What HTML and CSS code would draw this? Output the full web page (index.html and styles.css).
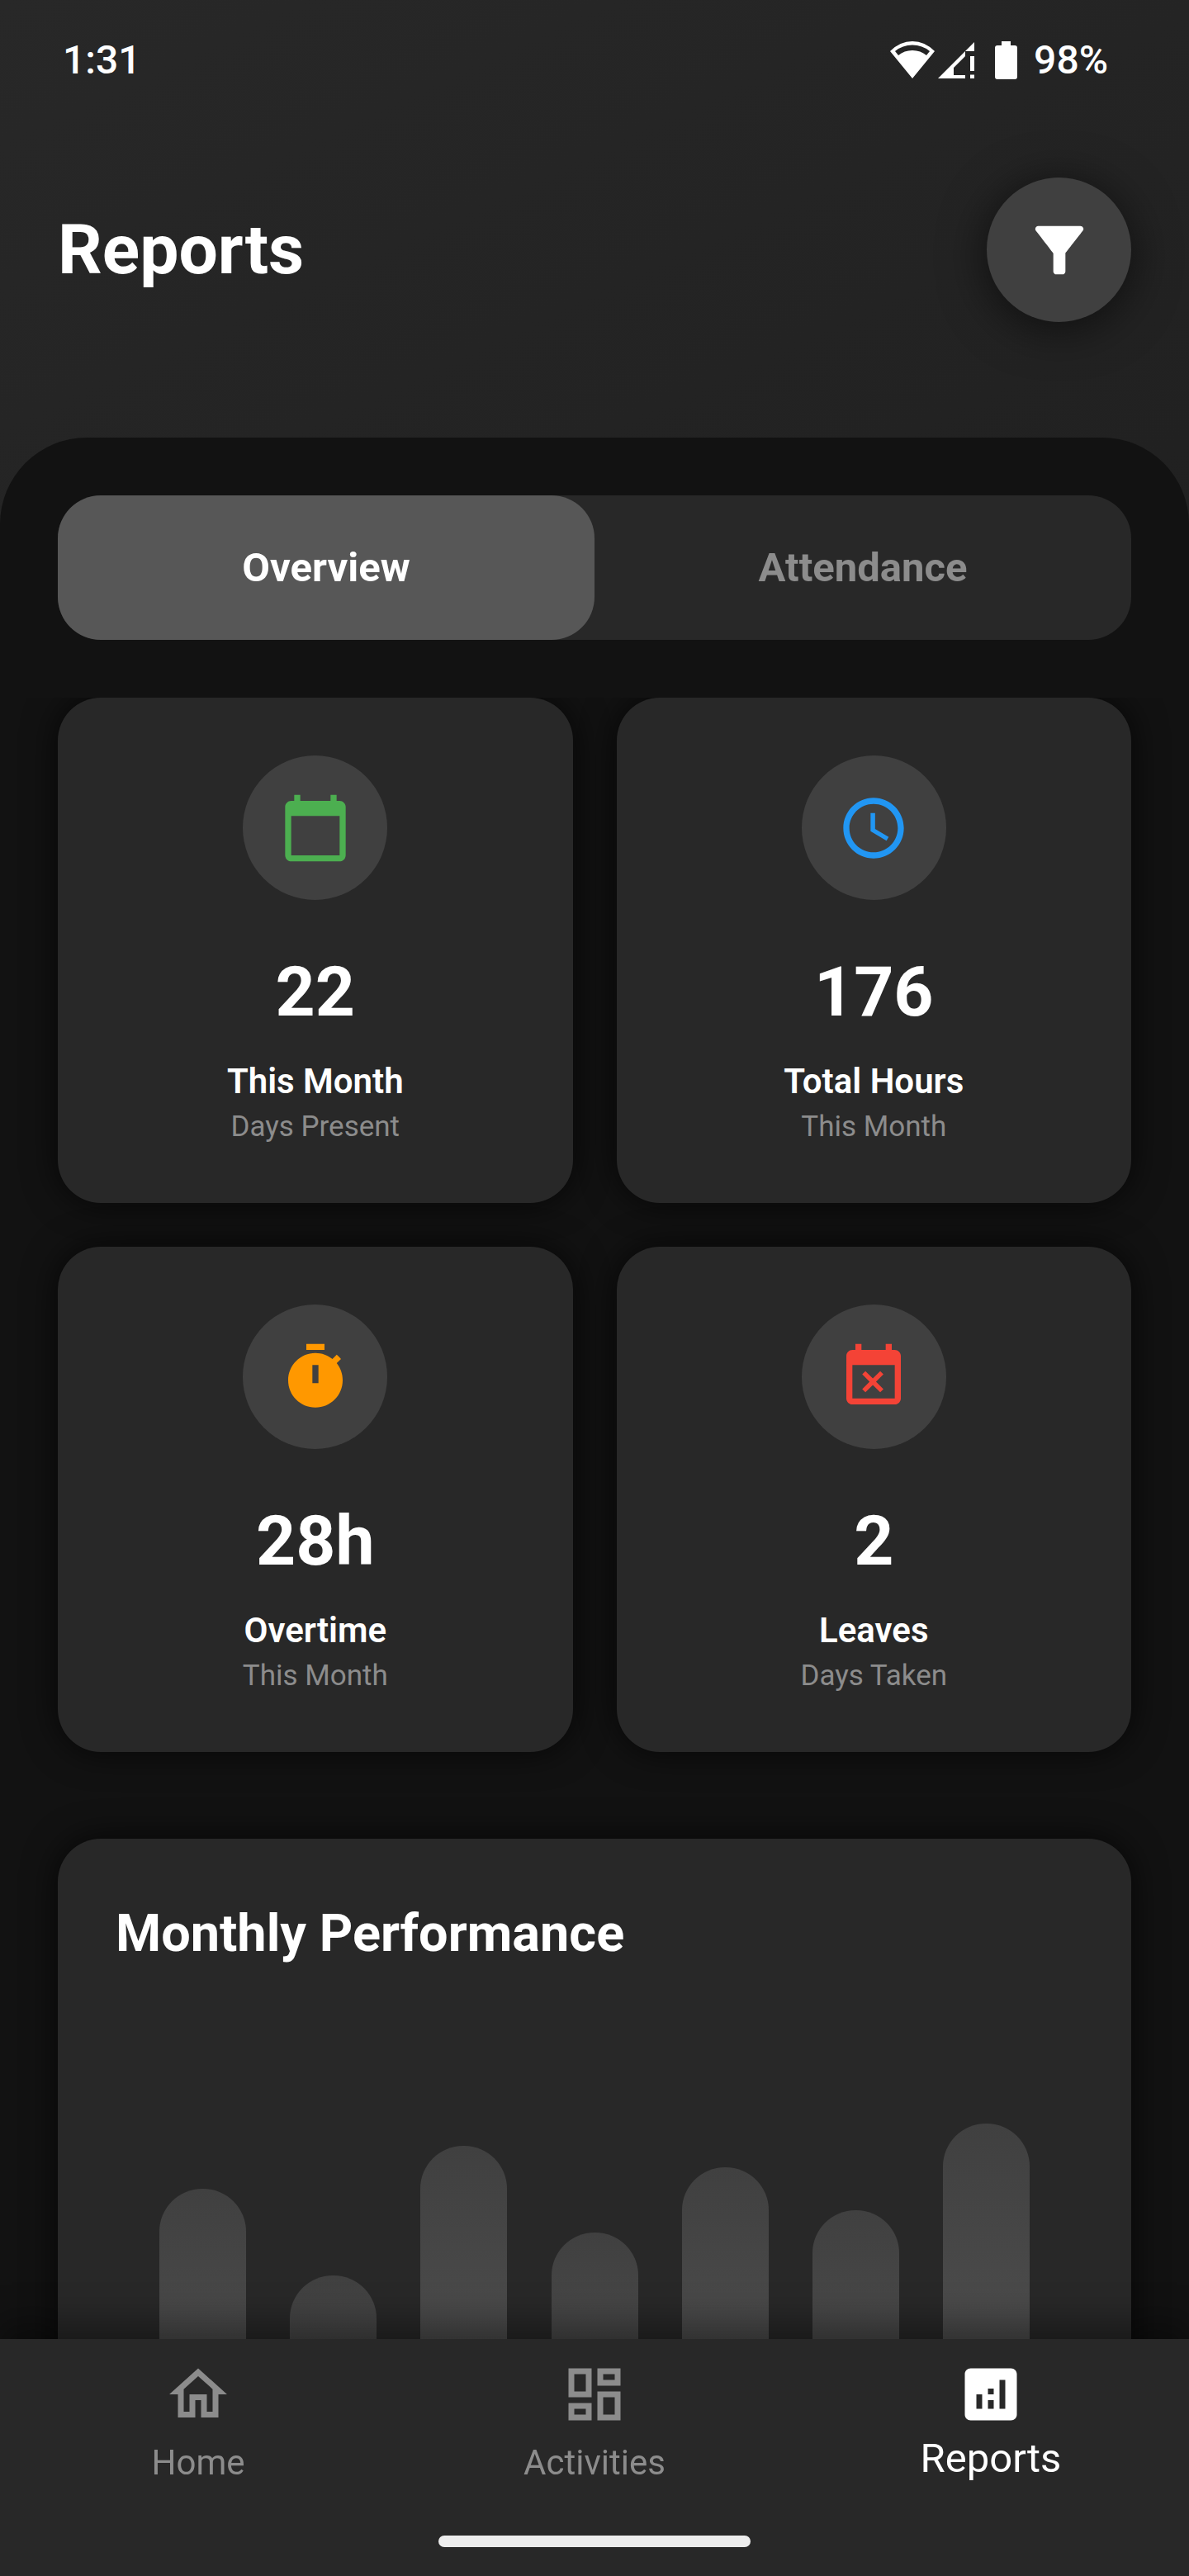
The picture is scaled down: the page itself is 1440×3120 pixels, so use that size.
FILE: index.html
```html
<!DOCTYPE html>
<html lang="en">
<head>
<meta charset="utf-8">
<meta name="viewport" content="width=device-width, initial-scale=1">
<title>Reports</title>
<link rel="stylesheet" href="styles.css">
</head>
<body>
<div class="app">
  <div class="status-bar">
    <span>1:31</span>
    <div class="status-icons">
      <svg class="wifi" viewBox="0 0 54 45" aria-hidden="true"><path fill-rule="evenodd" d="M27 45 0 12Q12 0 27 0T54 12ZM6 12 10 17Q17 11 27 11T44 17L48 12Q39 4.500 27 4.500T6 12Z"/></svg>
      <svg class="signal" viewBox="0 0 44 44" aria-hidden="true"><path fill-rule="evenodd" d="M44 0V11H33V17L19 31V40H33V44H0ZM39 17H44V35H39ZM39 39.500H44V44H39Z"/></svg>
      <svg class="battery" viewBox="0 0 27 46" aria-hidden="true"><path d="M8 0H19V5H24Q27 5 27 8V43Q27 46 24 46H3Q0 46 0 43V8Q0 5 3 5H8Z"/></svg>
      <span>98%</span>
    </div>
  </div>

  <header class="header">
    <h1 class="page-title">Reports</h1>
    <button class="filter-button" type="button" aria-label="Filter">
      <svg class="icon" viewBox="0 0 24 24" aria-hidden="true"><path d="M4.250 5.610C6.270 8.200 10 13 10 13v6c0 .55.45 1 1 1h2c.55 0 1-.45 1-1v-6s3.720-4.800 5.740-7.390A.998.998 0 0 0 18.950 4H5.040c-.83 0-1.300.95-.79 1.610z"/></svg>
    </button>
  </header>

  <main class="panel">
    <div class="tabs" role="tablist">
      <button class="tab tab-active" type="button" role="tab" aria-selected="true">Overview</button>
      <button class="tab" type="button" role="tab" aria-selected="false">Attendance</button>
    </div>

    <section class="stats" aria-label="Overview">
      <article class="card stat">
        <div class="stat-icon green"><svg class="icon" viewBox="0 0 24 24" aria-hidden="true"><path d="M20 3h-1V1h-2v2H7V1H5v2H4c-1.100 0-2 .9-2 2v16c0 1.100.9 2 2 2h16c1.100 0 2-.9 2-2V5c0-1.100-.9-2-2-2zm0 18H4V8h16v13z"/></svg></div>
        <strong class="stat-value">22</strong>
        <h2 class="stat-label">This Month</h2>
        <p class="stat-note">Days Present</p>
      </article>
      <article class="card stat">
        <div class="stat-icon blue"><svg class="icon" viewBox="0 0 24 24" aria-hidden="true"><path d="M11.990 2C6.470 2 2 6.480 2 12s4.470 10 9.990 10C17.520 22 22 17.520 22 12S17.520 2 11.990 2zM12 20c-4.420 0-8-3.580-8-8s3.580-8 8-8 8 3.580 8 8-3.580 8-8 8zM12.500 7H11v6l5.250 3.150.75-1.230-4.500-2.670z"/></svg></div>
        <strong class="stat-value">176</strong>
        <h2 class="stat-label">Total Hours</h2>
        <p class="stat-note">This Month</p>
      </article>
      <article class="card stat">
        <div class="stat-icon orange"><svg class="icon" viewBox="0 0 24 24" aria-hidden="true"><path fill-rule="evenodd" d="M15 1H9v2h6V1zm-4 13h2V8h-2v6zm8.030-6.610l1.420-1.420c-.43-.51-.9-.99-1.410-1.410l-1.420 1.420C16.070 4.740 14.120 4 12 4c-4.970 0-9 4.030-9 9s4.020 9 9 9 9-4.030 9-9c0-2.120-.74-4.070-1.970-5.610z"/></svg></div>
        <strong class="stat-value">28h</strong>
        <h2 class="stat-label">Overtime</h2>
        <p class="stat-note">This Month</p>
      </article>
      <article class="card stat">
        <div class="stat-icon red"><svg class="icon" viewBox="0 0 24 24" aria-hidden="true"><path d="M9.310 17l2.440-2.440L14.190 17l1.060-1.060-2.440-2.440 2.440-2.440L14.190 10l-2.440 2.440L9.310 10l-1.060 1.060 2.440 2.440-2.440 2.440L9.310 17zM19 3h-1V1h-2v2H8V1H6v2H5c-1.110 0-1.990.9-1.990 2L3 19c0 1.100.89 2 2 2h14c1.100 0 2-.9 2-2V5c0-1.100-.9-2-2-2zm0 16H5V8h14v11z"/></svg></div>
        <strong class="stat-value">2</strong>
        <h2 class="stat-label">Leaves</h2>
        <p class="stat-note">Days Taken</p>
      </article>
    </section>

    <section class="card chart-card">
      <h2 class="chart-title">Monthly Performance</h2>
      <div class="chart" role="img" aria-label="Monthly performance bar chart">
        <div class="bar" style="height: 80%"></div>
        <div class="bar" style="height: 60%"></div>
        <div class="bar" style="height: 90%"></div>
        <div class="bar" style="height: 70%"></div>
        <div class="bar" style="height: 85%"></div>
        <div class="bar" style="height: 75%"></div>
        <div class="bar" style="height: 95%"></div>
      </div>
    </section>
  </main>

  <footer class="bottom-bar">
    <nav class="nav" aria-label="Main">
      <a class="nav-link" href="#home">
        <svg class="nav-icon" viewBox="0 0 24 24" aria-hidden="true"><path d="M12 5.690l5 4.500V18h-2v-6H9v6H7v-7.810l5-4.500M12 3L2 12h3v8h6v-6h2v6h6v-8h3L12 3z"/></svg>
        <span>Home</span>
      </a>
      <a class="nav-link" href="#activities">
        <svg class="nav-icon" viewBox="0 0 24 24" aria-hidden="true"><path d="M19 5v2h-4V5h4M9 5v6H5V5h4m10 8v6h-4v-6h4M9 17v2H5v-2h4M21 3h-8v6h8V3zM11 3H3v10h8V3zm10 8h-8v10h8V11zm-10 4H3v6h8v-6z"/></svg>
        <span>Activities</span>
      </a>
      <a class="nav-link nav-link-active" href="#reports" aria-current="page">
        <svg class="nav-icon" viewBox="0 0 24 24" aria-hidden="true"><path d="M19 3H5c-1.100 0-2 .9-2 2v14c0 1.100.9 2 2 2h14c1.100 0 2-.9 2-2V5c0-1.100-.9-2-2-2zM9 17H7v-5h2v5zm4 0h-2v-3h2v3zm0-5h-2v-2h2v2zm4 5h-2V7h2v10z"/></svg>
        <span>Reports</span>
      </a>
    </nav>
    <div class="home-indicator"></div>
  </footer>
</div>
</body>
</html>
```
FILE: styles.css
```css
:root {
  --surface: #282828;
  --background: #121212;
  --raised: #404040;
  --muted: #8c8c8c;
  --gutter: 70px;
  --radius: 52px;
}

* {
  box-sizing: border-box;
}

body {
  margin: 0;
  color: #fff;
  background: var(--background);
  font-family: Roboto, "Liberation Sans", sans-serif;
}

h1,
h2,
p {
  margin: 0;
}

button {
  border: 0;
  padding: 0;
  color: inherit;
  font: inherit;
  cursor: pointer;
}

svg {
  display: block;
  fill: currentColor;
}

.app {
  display: flex;
  flex-direction: column;
  height: 100vh;
  background: linear-gradient(155deg, #282828, #121212);
}

/* Status bar */

.status-bar {
  display: flex;
  align-items: center;
  justify-content: space-between;
  height: 145px;
  padding: 0 98px 0 76px;
  font-size: 48px;
  font-weight: 500;
  line-height: 56px;
}

.status-icons {
  display: flex;
  align-items: center;
}

.wifi {
  width: 54px;
  height: 45px;
  margin-right: 4px;
}

.signal {
  width: 44px;
  height: 44px;
  margin-right: 25px;
}

.battery {
  width: 27px;
  height: 46px;
  margin-right: 20px;
}

/* Header */

.header {
  display: flex;
  align-items: center;
  justify-content: space-between;
  padding: var(--gutter) var(--gutter) 140px;
}

.page-title {
  font-size: 84px;
  font-weight: 700;
  line-height: 120px;
}

.filter-button {
  display: grid;
  place-items: center;
  width: 175px;
  height: 175px;
  border-radius: 50%;
  background: var(--raised);
  box-shadow: 0 7px 56px rgba(0, 0, 0, 0.6);
}

.icon {
  width: 88px;
  height: 88px;
}

/* Content panel */

.panel {
  flex: 1;
  min-height: 0;
  padding: var(--gutter);
  overflow-y: auto;
  scrollbar-width: none;
  border-radius: 105px 105px 0 0;
  background: var(--background);
}

.tabs {
  display: grid;
  grid-template-columns: 1fr 1fr;
  border-radius: var(--radius);
  background: var(--surface);
}

.tab {
  height: 175px;
  border-radius: var(--radius);
  background: transparent;
  color: var(--muted);
  font-size: 49px;
  font-weight: 700;
}

.tab-active {
  background: #575757;
  color: #fff;
}

.card {
  border-radius: var(--radius);
  background: var(--surface);
  box-shadow: 0 0 42px rgba(0, 0, 0, 0.7);
}

/* Card shadows stop at the top edge of the grid */
.stats {
  display: grid;
  grid-template-columns: 1fr 1fr;
  gap: 53px;
  margin: var(--gutter) 0 105px;
  clip-path: inset(0 -70px -70px);
}

.stat {
  display: flex;
  flex-direction: column;
  align-items: center;
  padding: 70px 35px 67px;
  text-align: center;
}

.stat-icon {
  display: grid;
  place-items: center;
  width: 175px;
  height: 175px;
  margin-bottom: 52px;
  border-radius: 50%;
  background: var(--raised);
}

.green {
  color: #4caf50;
}

.blue {
  color: #2196f3;
}

.orange {
  color: #ff9800;
}

.red {
  color: #f44336;
}

.stat-value {
  margin-bottom: 18px;
  font-size: 84px;
  font-weight: 700;
  line-height: 120px;
}

.stat-label {
  font-size: 42px;
  font-weight: 600;
  line-height: 60px;
}

.stat-note {
  color: var(--muted);
  font-size: 35px;
  line-height: 50px;
}

.chart-card {
  padding: var(--gutter);
}

.chart-title {
  margin-bottom: 159px;
  font-size: 63px;
  font-weight: 700;
  line-height: 90px;
}

.chart {
  display: flex;
  align-items: flex-end;
  justify-content: space-evenly;
  height: 525px;
}

.bar {
  width: 105px;
  border-radius: var(--radius);
  background: linear-gradient(#404040, #575757);
}

/* Bottom navigation */

.bottom-bar {
  position: relative;
  z-index: 1;
  display: flex;
  flex-direction: column;
  align-items: center;
  gap: 63px;
  padding: 25px 0 35px;
  background: var(--surface);
  box-shadow: 0 -18px 42px rgba(0, 0, 0, 0.4);
}

.nav {
  display: grid;
  grid-template-columns: repeat(3, 1fr);
  width: 100%;
}

.nav-link {
  display: flex;
  flex-direction: column;
  align-items: center;
  justify-content: space-between;
  height: 150px;
  color: var(--muted);
  font-size: 42px;
  line-height: 50px;
  text-decoration: none;
}

.nav-link-active {
  color: #fff;
  font-size: 49px;
  line-height: 60px;
}

.nav-icon {
  width: 84px;
  height: 84px;
}

.home-indicator {
  width: 378px;
  height: 14px;
  border-radius: 7px;
  background: #ededed;
}
```
